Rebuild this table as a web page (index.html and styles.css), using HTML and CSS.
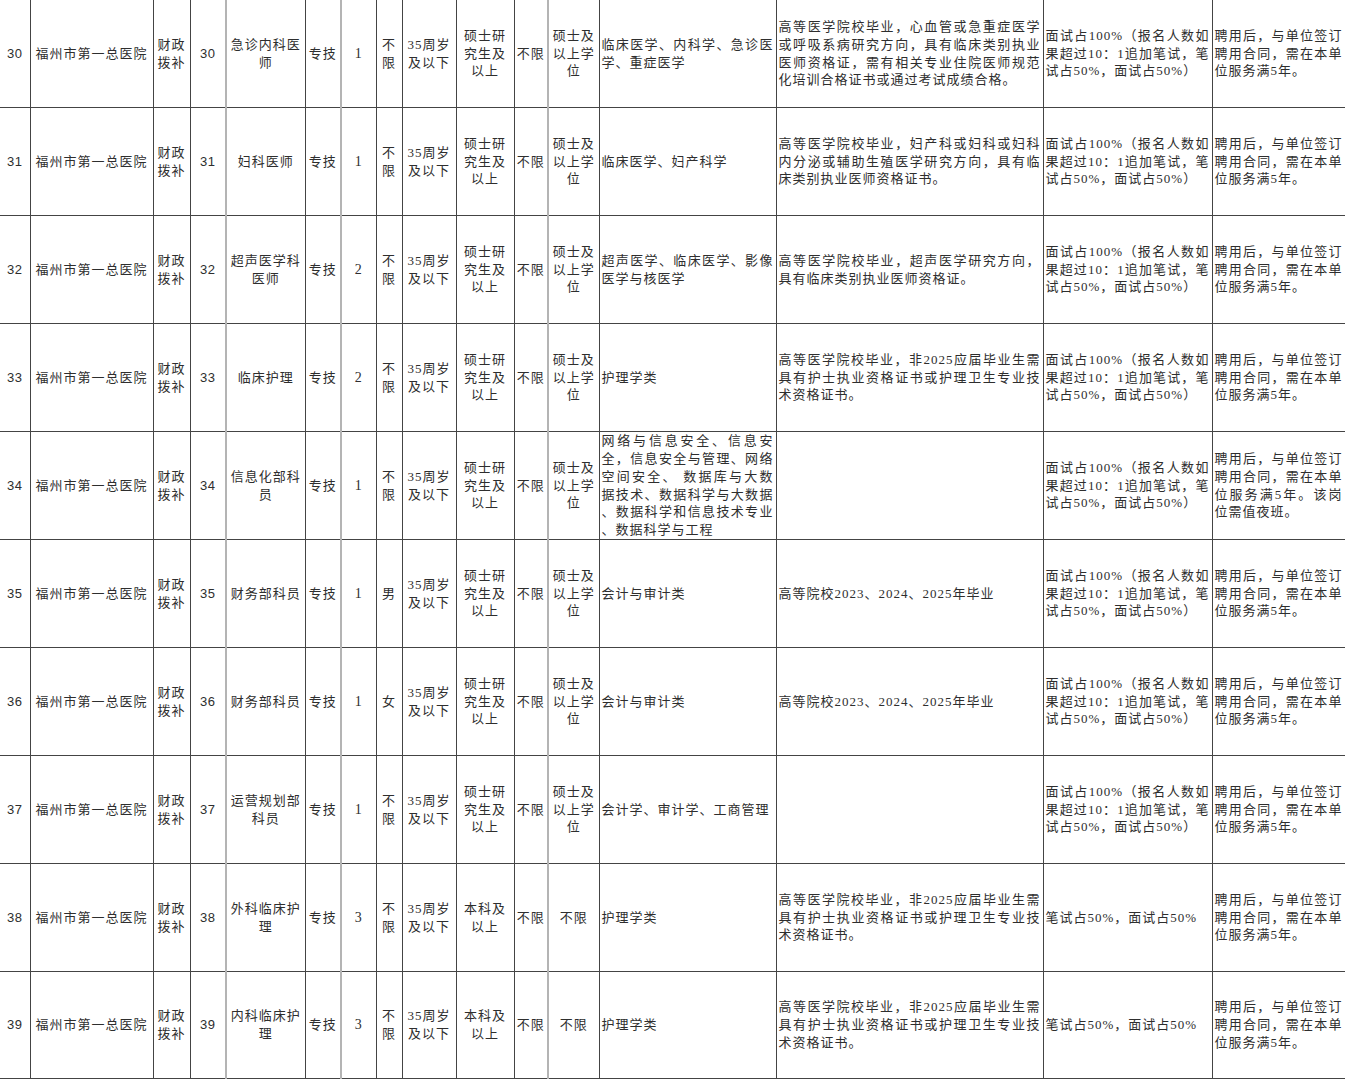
FILE: index.html
```html
<!DOCTYPE html>
<html lang="zh-CN">
<head>
<meta charset="utf-8">
<title>福州市第一总医院 招聘岗位</title>
<link rel="stylesheet" href="styles.css">
</head>
<body>
<table class="jobs">
  <colgroup>
    <col class="w-no"><col class="w-unit"><col class="w-fund"><col class="w-code"><col class="w-post"><col class="w-type"><col class="w-num"><col class="w-sex"><col class="w-age"><col class="w-edu"><col class="w-fresh"><col class="w-deg"><col class="w-major"><col class="w-req"><col class="w-exam"><col class="w-note">
  </colgroup>
  <tbody>
    <tr>
      <td class="c num">30</td><td class="c">福州市第一总医院</td><td class="c">财政拨补</td><td class="c num">30</td><td class="c lite">急诊内科医师</td><td class="c">专技</td><td class="c lite cnt">1</td><td class="c">不限</td><td class="c">35周岁及以下</td><td class="c">硕士研究生及以上</td><td class="c">不限</td><td class="c lite">硕士及以上学位</td>
      <td class="j">临床医学、内科学、急诊医学、重症医学</td>
      <td class="j">高等医学院校毕业，心血管或急重症医学或呼吸系病研究方向，具有临床类别执业医师资格证，需有相关专业住院医师规范化培训合格证书或通过考试成绩合格。</td>
      <td class="j">面试占100%（报名人数如果超过10：1追加笔试，笔试占50%，面试占50%）</td>
      <td class="j">聘用后，与单位签订聘用合同，需在本单位服务满5年。</td>
    </tr>
    <tr>
      <td class="c num">31</td><td class="c">福州市第一总医院</td><td class="c">财政拨补</td><td class="c num">31</td><td class="c lite">妇科医师</td><td class="c">专技</td><td class="c lite cnt">1</td><td class="c">不限</td><td class="c">35周岁及以下</td><td class="c">硕士研究生及以上</td><td class="c">不限</td><td class="c lite">硕士及以上学位</td>
      <td class="j">临床医学、妇产科学</td>
      <td class="j">高等医学院校毕业，妇产科或妇科或妇科内分泌或辅助生殖医学研究方向，具有临床类别执业医师资格证书。</td>
      <td class="j">面试占100%（报名人数如果超过10：1追加笔试，笔试占50%，面试占50%）</td>
      <td class="j">聘用后，与单位签订聘用合同，需在本单位服务满5年。</td>
    </tr>
    <tr>
      <td class="c num">32</td><td class="c">福州市第一总医院</td><td class="c">财政拨补</td><td class="c num">32</td><td class="c lite">超声医学科医师</td><td class="c">专技</td><td class="c lite cnt">2</td><td class="c">不限</td><td class="c">35周岁及以下</td><td class="c">硕士研究生及以上</td><td class="c">不限</td><td class="c lite">硕士及以上学位</td>
      <td class="j">超声医学、临床医学、影像医学与核医学</td>
      <td class="j">高等医学院校毕业，超声医学研究方向，具有临床类别执业医师资格证。</td>
      <td class="j">面试占100%（报名人数如果超过10：1追加笔试，笔试占50%，面试占50%）</td>
      <td class="j">聘用后，与单位签订聘用合同，需在本单位服务满5年。</td>
    </tr>
    <tr>
      <td class="c num">33</td><td class="c">福州市第一总医院</td><td class="c">财政拨补</td><td class="c num">33</td><td class="c lite">临床护理</td><td class="c">专技</td><td class="c lite cnt">2</td><td class="c">不限</td><td class="c">35周岁及以下</td><td class="c">硕士研究生及以上</td><td class="c">不限</td><td class="c lite">硕士及以上学位</td>
      <td class="j">护理学类</td>
      <td class="j">高等医学院校毕业，非2025应届毕业生需具有护士执业资格证书或护理卫生专业技术资格证书。</td>
      <td class="j">面试占100%（报名人数如果超过10：1追加笔试，笔试占50%，面试占50%）</td>
      <td class="j">聘用后，与单位签订聘用合同，需在本单位服务满5年。</td>
    </tr>
    <tr>
      <td class="c num">34</td><td class="c">福州市第一总医院</td><td class="c">财政拨补</td><td class="c num">34</td><td class="c lite">信息化部科员</td><td class="c">专技</td><td class="c lite cnt">1</td><td class="c">不限</td><td class="c">35周岁及以下</td><td class="c">硕士研究生及以上</td><td class="c">不限</td><td class="c lite">硕士及以上学位</td>
      <td class="j"><span class="ln">网络与信息安全、信息安</span><span class="ln">全，信息安全与管理、网络</span><span class="ln">空间安全、 数据库与大数</span><span class="ln">据技术、数据科学与大数据</span><span class="ln">、数据科学和信息技术专业</span><span class="ln last">、数据科学与工程</span></td>
      <td class="j"></td>
      <td class="j">面试占100%（报名人数如果超过10：1追加笔试，笔试占50%，面试占50%）</td>
      <td class="j">聘用后，与单位签订聘用合同，需在本单位服务满5年。该岗位需值夜班。</td>
    </tr>
    <tr>
      <td class="c num">35</td><td class="c">福州市第一总医院</td><td class="c">财政拨补</td><td class="c num">35</td><td class="c lite">财务部科员</td><td class="c">专技</td><td class="c lite cnt">1</td><td class="c">男</td><td class="c">35周岁及以下</td><td class="c">硕士研究生及以上</td><td class="c">不限</td><td class="c lite">硕士及以上学位</td>
      <td class="j">会计与审计类</td>
      <td class="j">高等院校2023、2024、2025年毕业</td>
      <td class="j">面试占100%（报名人数如果超过10：1追加笔试，笔试占50%，面试占50%）</td>
      <td class="j">聘用后，与单位签订聘用合同，需在本单位服务满5年。</td>
    </tr>
    <tr>
      <td class="c num">36</td><td class="c">福州市第一总医院</td><td class="c">财政拨补</td><td class="c num">36</td><td class="c lite">财务部科员</td><td class="c">专技</td><td class="c lite cnt">1</td><td class="c">女</td><td class="c">35周岁及以下</td><td class="c">硕士研究生及以上</td><td class="c">不限</td><td class="c lite">硕士及以上学位</td>
      <td class="j">会计与审计类</td>
      <td class="j">高等院校2023、2024、2025年毕业</td>
      <td class="j">面试占100%（报名人数如果超过10：1追加笔试，笔试占50%，面试占50%）</td>
      <td class="j">聘用后，与单位签订聘用合同，需在本单位服务满5年。</td>
    </tr>
    <tr>
      <td class="c num">37</td><td class="c">福州市第一总医院</td><td class="c">财政拨补</td><td class="c num">37</td><td class="c lite">运营规划部科员</td><td class="c">专技</td><td class="c lite cnt">1</td><td class="c">不限</td><td class="c">35周岁及以下</td><td class="c">硕士研究生及以上</td><td class="c">不限</td><td class="c lite">硕士及以上学位</td>
      <td class="j">会计学、审计学、工商管理</td>
      <td class="j"></td>
      <td class="j">面试占100%（报名人数如果超过10：1追加笔试，笔试占50%，面试占50%）</td>
      <td class="j">聘用后，与单位签订聘用合同，需在本单位服务满5年。</td>
    </tr>
    <tr>
      <td class="c num">38</td><td class="c">福州市第一总医院</td><td class="c">财政拨补</td><td class="c num">38</td><td class="c lite">外科临床护理</td><td class="c">专技</td><td class="c lite cnt">3</td><td class="c">不限</td><td class="c">35周岁及以下</td><td class="c">本科及以上</td><td class="c">不限</td><td class="c lite">不限</td>
      <td class="j">护理学类</td>
      <td class="j">高等医学院校毕业，非2025应届毕业生需具有护士执业资格证书或护理卫生专业技术资格证书。</td>
      <td class="j">笔试占50%，面试占50%</td>
      <td class="j">聘用后，与单位签订聘用合同，需在本单位服务满5年。</td>
    </tr>
    <tr class="last-row">
      <td class="c num">39</td><td class="c">福州市第一总医院</td><td class="c">财政拨补</td><td class="c num">39</td><td class="c lite">内科临床护理</td><td class="c">专技</td><td class="c lite cnt">3</td><td class="c">不限</td><td class="c">35周岁及以下</td><td class="c">本科及以上</td><td class="c">不限</td><td class="c lite">不限</td>
      <td class="j">护理学类</td>
      <td class="j">高等医学院校毕业，非2025应届毕业生需具有护士执业资格证书或护理卫生专业技术资格证书。</td>
      <td class="j">笔试占50%，面试占50%</td>
      <td class="j">聘用后，与单位签订聘用合同，需在本单位服务满5年。</td>
    </tr>
  </tbody>
</table>
</body>
</html>
```
FILE: styles.css
```css
html, body {
  margin: 0;
  padding: 0;
  background: #ffffff;
}

.jobs {
  border-collapse: collapse;
  table-layout: fixed;
  width: 1345px;
  font-family: "Liberation Serif", "Noto Sans CJK SC", serif;
  font-size: 13px;
  letter-spacing: 1px;
  line-height: 17.8px;
  color: #2e2e2e;
}

.w-no { width: 30px; }
.w-unit { width: 123px; }
.w-fund { width: 37px; }
.w-code { width: 36px; }
.w-post { width: 79px; }
.w-type { width: 36px; }
.w-num { width: 35px; }
.w-sex { width: 26px; }
.w-age { width: 54px; }
.w-edu { width: 58px; }
.w-fresh { width: 34px; }
.w-deg { width: 51px; }
.w-major { width: 177px; }
.w-req { width: 267px; }
.w-exam { width: 169px; }
.w-note { width: 133px; }

.jobs td {
  border: 1px solid #444444;
  height: 107px;
  padding: 0 2px;
  vertical-align: middle;
  overflow: hidden;
}

.jobs tr:first-child td { border-top: none; }
.jobs td:first-child { border-left: none; }
.jobs .last-row td { height: 106px; }

.jobs td.lite { border-left: 2px solid #b4b4b4; }

.c { text-align: center; }
.num { font-family: "Liberation Sans", "Noto Sans CJK SC", sans-serif; letter-spacing: 0.5px; }
.cnt { font-size: 14px; }
.j { text-align: justify; padding-left: 3px; padding-right: 2px; }

.ln {
  display: block;
  text-align: justify;
  text-align-last: justify;
  white-space: nowrap;
}
.ln.last { text-align-last: left; }
```
